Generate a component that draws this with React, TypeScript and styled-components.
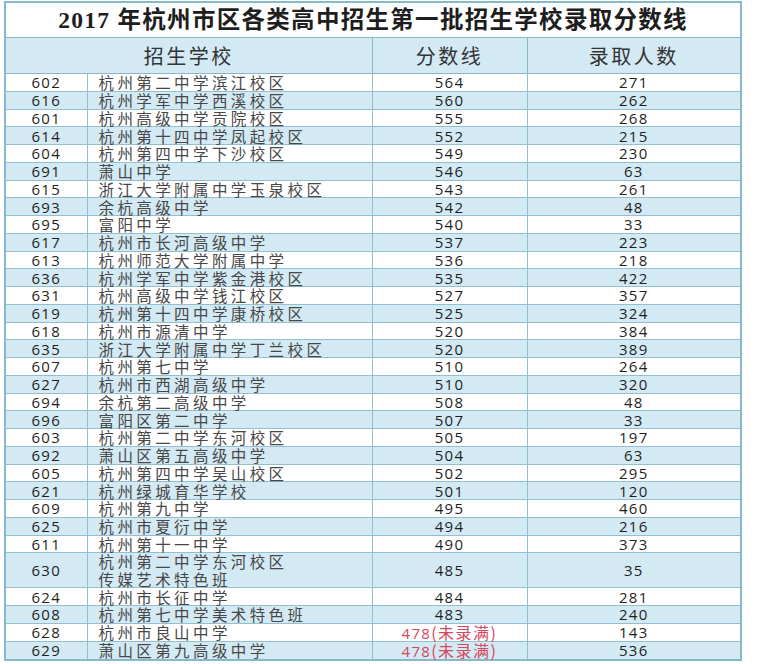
import React from "react";
import styled, { createGlobalStyle } from "styled-components";

const Global = createGlobalStyle`
  html, body { margin: 0; padding: 0; background: #ffffff; }
  body { font-family: "Open Sans", "Noto Sans CJK SC", sans-serif; }
`;

const Page = styled.div`
  width: 760px;
  height: 664px;
  padding: 1px 0 0 4px;
  box-sizing: border-box;
  background: #ffffff;
`;

const Table = styled.table`
  width: 736px;
  table-layout: fixed;
  border-collapse: collapse;
  border: 2px solid #86b9cb;
`;

const TitleCell = styled.td`
  height: 34px;
  padding: 0;
  background: #ffffff;
  border: 1px solid #86b9cb;
  text-align: center;
  font-family: "Liberation Serif", "Noto Sans CJK SC", serif;
  font-weight: 700;
  font-size: 23.5px;
  line-height: 26px;
  letter-spacing: 1.3px;
  color: #1e1e1e;
`;

const HeadCell = styled.td`
  height: 35px;
  padding: 0;
  background: #d3e9f3;
  border: 1px solid #86b9cb;
  text-align: center;
  font-family: "Noto Sans CJK SC", sans-serif;
  font-size: 20px;
  line-height: 24px;
  letter-spacing: 2.5px;
  color: #333333;
`;

const Row = styled.tr<{ $blue: boolean; $tall?: boolean }>`
  height: ${(p) => (p.$tall ? "35px" : "17.75px")};
  background: ${(p) => (p.$blue ? "#d3e9f3" : "#ffffff")};
`;

const Cell = styled.td<{ $align?: "left" | "center"; $red?: boolean }>`
  padding: 0 0 0 ${(p) => (p.$align === "left" ? "11px" : "0")};
  border: 1px solid #93c0d0;
  text-align: ${(p) => p.$align ?? "center"};
  font-family: "Open Sans", "Noto Sans CJK SC", sans-serif;
  font-size: 15px;
  letter-spacing: 1.3px;
  line-height: 16px;
  color: ${(p) => (p.$red ? "#d4475c" : "#1f1f1f")};
  white-space: nowrap;
  vertical-align: middle;
`;

const SchoolName = styled.span`
  display: block;
  font-family: "Noto Sans CJK SC", sans-serif;
  font-size: 15.5px;
  letter-spacing: 3.4px;
  line-height: 16px;
  color: #474747;
  & + & { margin-top: 2px; }
`;

const RedNote = styled.span`
  font-family: "Noto Sans CJK SC", sans-serif;
  letter-spacing: 1.5px;
  font-size: 16px;
`;

type Item = { code: string; name: string[]; score: string; count: string; note?: boolean };

const rows: Item[] = [
  { code: "602", name: ["杭州第二中学滨江校区"], score: "564", count: "271" },
  { code: "616", name: ["杭州学军中学西溪校区"], score: "560", count: "262" },
  { code: "601", name: ["杭州高级中学贡院校区"], score: "555", count: "268" },
  { code: "614", name: ["杭州第十四中学凤起校区"], score: "552", count: "215" },
  { code: "604", name: ["杭州第四中学下沙校区"], score: "549", count: "230" },
  { code: "691", name: ["萧山中学"], score: "546", count: "63" },
  { code: "615", name: ["浙江大学附属中学玉泉校区"], score: "543", count: "261" },
  { code: "693", name: ["余杭高级中学"], score: "542", count: "48" },
  { code: "695", name: ["富阳中学"], score: "540", count: "33" },
  { code: "617", name: ["杭州市长河高级中学"], score: "537", count: "223" },
  { code: "613", name: ["杭州师范大学附属中学"], score: "536", count: "218" },
  { code: "636", name: ["杭州学军中学紫金港校区"], score: "535", count: "422" },
  { code: "631", name: ["杭州高级中学钱江校区"], score: "527", count: "357" },
  { code: "619", name: ["杭州第十四中学康桥校区"], score: "525", count: "324" },
  { code: "618", name: ["杭州市源清中学"], score: "520", count: "384" },
  { code: "635", name: ["浙江大学附属中学丁兰校区"], score: "520", count: "389" },
  { code: "607", name: ["杭州第七中学"], score: "510", count: "264" },
  { code: "627", name: ["杭州市西湖高级中学"], score: "510", count: "320" },
  { code: "694", name: ["余杭第二高级中学"], score: "508", count: "48" },
  { code: "696", name: ["富阳区第二中学"], score: "507", count: "33" },
  { code: "603", name: ["杭州第二中学东河校区"], score: "505", count: "197" },
  { code: "692", name: ["萧山区第五高级中学"], score: "504", count: "63" },
  { code: "605", name: ["杭州第四中学吴山校区"], score: "502", count: "295" },
  { code: "621", name: ["杭州绿城育华学校"], score: "501", count: "120" },
  { code: "609", name: ["杭州第九中学"], score: "495", count: "460" },
  { code: "625", name: ["杭州市夏衍中学"], score: "494", count: "216" },
  { code: "611", name: ["杭州第十一中学"], score: "490", count: "373" },
  { code: "630", name: ["杭州第二中学东河校区", "传媒艺术特色班"], score: "485", count: "35" },
  { code: "624", name: ["杭州市长征中学"], score: "484", count: "281" },
  { code: "608", name: ["杭州第七中学美术特色班"], score: "483", count: "240" },
  { code: "628", name: ["杭州市良山中学"], score: "478", count: "143", note: true },
  { code: "629", name: ["萧山区第九高级中学"], score: "478", count: "536", note: true },
];

export default function App() {
  return (
    <Page>
      <Global />
      <Table>
        <colgroup>
          <col style={{ width: 82 }} />
          <col style={{ width: 285 }} />
          <col style={{ width: 155 }} />
          <col style={{ width: 214 }} />
        </colgroup>
        <tbody>
          <tr>
            <TitleCell colSpan={4}>2017 年杭州市区各类高中招生第一批招生学校录取分数线</TitleCell>
          </tr>
          <tr>
            <HeadCell colSpan={2}>招生学校</HeadCell>
            <HeadCell>分数线</HeadCell>
            <HeadCell>录取人数</HeadCell>
          </tr>
          {rows.map((r, i) => (
            <Row key={r.code} $blue={i % 2 === 1} $tall={r.name.length > 1}>
              <Cell>{r.code}</Cell>
              <Cell $align="left">
                {r.name.map((n) => (
                  <SchoolName key={n}>{n}</SchoolName>
                ))}
              </Cell>
              <Cell $red={r.note}>
                {r.score}
                {r.note && <RedNote>(未录满)</RedNote>}
              </Cell>
              <Cell>{r.count}</Cell>
            </Row>
          ))}
        </tbody>
      </Table>
    </Page>
  );
}
